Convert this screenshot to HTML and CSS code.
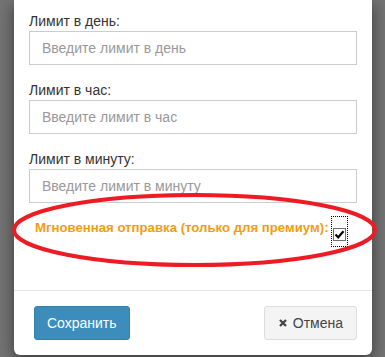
FILE: index.html
```html
<!DOCTYPE html>
<html>
<head>
    <meta charset="utf-8">
    <title>Лимиты отправки</title>
    <link rel="stylesheet" href="styles.css">
</head>
<body>
    <div class="modal">
        <div class="modal-body">
            <div class="form-group">
                <label>Лимит в день:</label>
                <input type="text" class="form-control" placeholder="Введите лимит в день">
            </div>
            <div class="form-group">
                <label>Лимит в час:</label>
                <input type="text" class="form-control" placeholder="Введите лимит в час">
            </div>
            <div class="form-group">
                <label>Лимит в минуту:</label>
                <input type="text" class="form-control" placeholder="Введите лимит в минуту">
            </div>
            <div class="premium-row">
                <span class="premium-text">Мгновенная отправка (только для премиум):</span>
                <span class="check-focus">
                    <span class="check-box">
                        <svg width="11" height="11" viewBox="0 0 11 11"><path d="M1.5 5.5 L4.2 8.3 L9.5 2.2" fill="none" stroke="#000" stroke-width="2.2"/></svg>
                    </span>
                </span>
            </div>
        </div>
        <div class="modal-footer">
            <a href="javascript:;" class="btn btn-primary">Сохранить</a>
            <a href="javascript:;" class="btn btn-default">
                <svg class="icon-times" width="8" height="8" viewBox="0 0 8 8"><path d="M1 1 L7 7 M7 1 L1 7" stroke="#444" stroke-width="2.3"/></svg>
                Отмена
            </a>
        </div>
    </div>
    <!-- красная пометка поверх окна -->
    <svg class="mark" width="372" height="82" viewBox="0 0 372 82">
        <ellipse cx="184.5" cy="39" rx="180.5" ry="35" fill="none" stroke="#ed1c24" stroke-width="4"/>
    </svg>
</body>
</html>
```

FILE: styles.css
```css
* {
    margin: 0;
    padding: 0;
    box-sizing: border-box;
}

body {
    background: #737373;
    font: 14px/20px "Liberation Sans", Arial, sans-serif;
    color: #333;
    height: 357px;
    overflow: hidden;
}

.modal {
    width: 358px;
    margin-left: 14px;
    background: #fff;
    border-radius: 0 0 6px 6px;
    box-shadow: 0 5px 15px rgba(0, 0, 0, .5);
}

.modal-body {
    padding: 11px 15px 15px;
}

.form-group {
    margin-bottom: 15px;
}

.form-group label {
    display: block;
    font-weight: normal;
}

.form-control {
    display: block;
    width: 100%;
    height: 34px;
    padding: 6px 12px;
    border: 1px solid #ccc;
    border-radius: 0;
    font: 14px/20px "Liberation Sans", Arial, sans-serif;
    color: #555;
    outline: none;
}

.form-control::placeholder {
    color: #999;
}

.premium-row {
    display: flex;
    align-items: center;
    height: 20px;
    margin-top: 1px;
    margin-bottom: 37px;
    padding-left: 6px;
}

.premium-text {
    color: #f39c12;
    font-weight: bold;
    font-size: 13.2px;
}

.check-focus {
    display: flex;
    align-items: center;
    justify-content: center;
    width: 17px;
    height: 31px;
    margin: -2px 0 -9px 2px;
    border: 1px dotted #000;
}

.check-box {
    display: flex;
    align-items: center;
    justify-content: center;
    width: 13px;
    height: 13px;
    margin-top: 5px;
    border: 1px solid #707070;
    background: #fff;
}

.modal-footer {
    display: flex;
    justify-content: space-between;
    padding: 15px 15px 15px 20px;
    border-top: 1px solid #e5e5e5;
}

.btn {
    display: inline-flex;
    align-items: center;
    height: 34px;
    padding: 6px 12px;
    border: 1px solid transparent;
    border-radius: 3px;
    font-size: 14px;
    text-decoration: none;
}

.btn-primary {
    background: #3c8dbc;
    border-color: #367fa9;
    color: #fff;
}

.btn-default {
    padding: 6px 13px;
    background: #f4f4f4;
    border-color: #ddd;
    color: #444;
}

.icon-times {
    margin: 0 6px 0 1px;
}

.mark {
    position: absolute;
    left: 10px;
    top: 191px;
}
```
